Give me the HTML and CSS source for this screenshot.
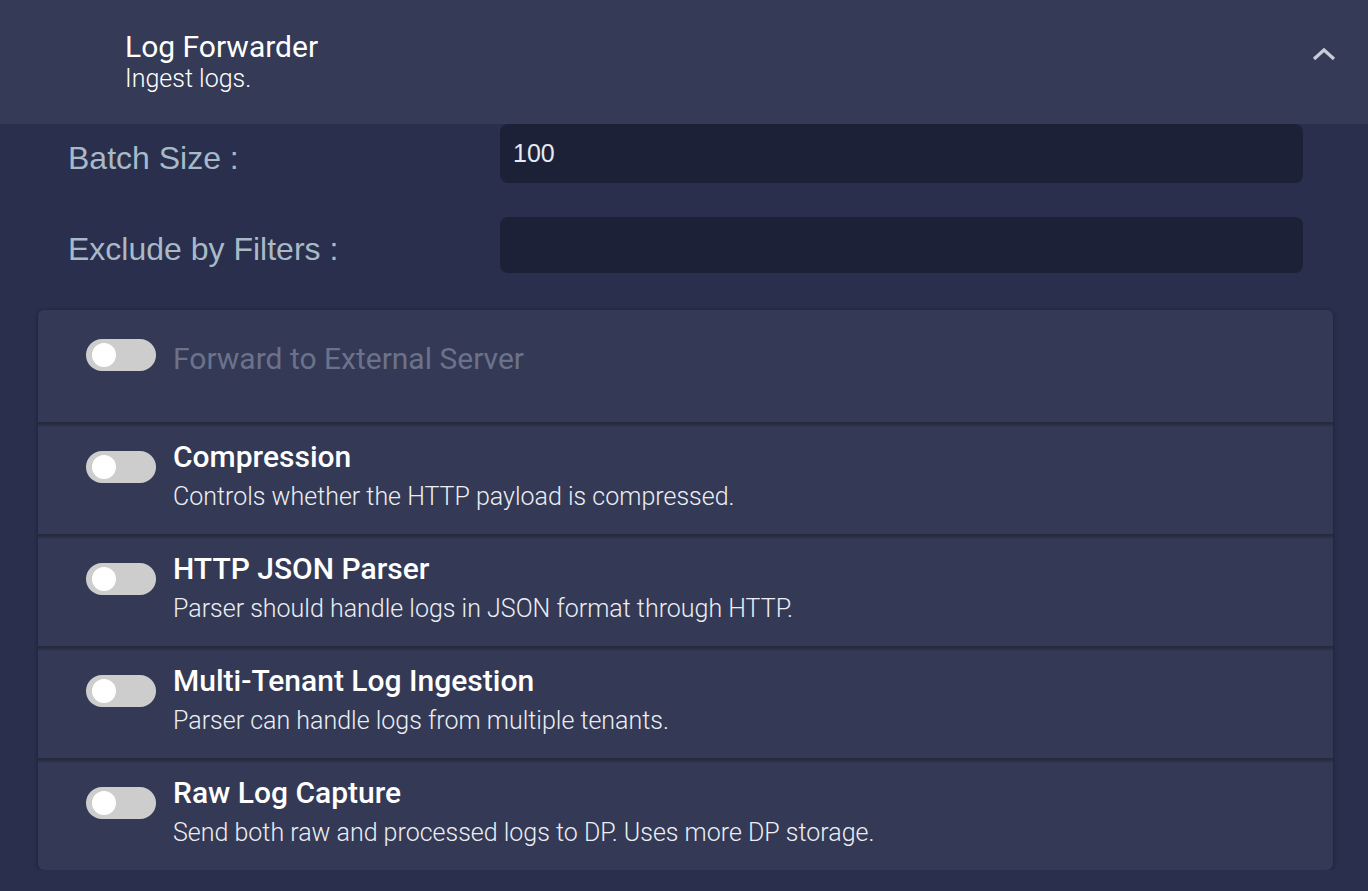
FILE: index.html
```html
<!DOCTYPE html>
<html>

<head>
    <title>Log Forwarder</title>

    <link rel="stylesheet" href="styles.css">
</head>

<body>
    <div class="header">
        <div class="header-text">
            <div class="header-title">Log Forwarder</div>
            <div class="header-sub">Ingest logs.</div>
        </div>
        <svg class="chevron" width="24" height="14" viewBox="0 0 24 14">
            <polyline points="2,12 12,3 22,12" fill="none" stroke="#c9cdd9" stroke-width="3.2" />
        </svg>
    </div>

    <div class="form">
        <div class="field">
            <label class="field-label">Batch Size :</label>
            <input class="field-input tall" type="text" value="100">
        </div>
        <div class="field">
            <label class="field-label">Exclude by Filters :</label>
            <input class="field-input" type="text" value="">
        </div>
    </div>

    <div class="card">
        <div class="row row-main">
            <span class="toggle"><span class="knob"></span></span>
            <div class="row-text">
                <div class="row-title muted">Forward to External Server</div>
            </div>
        </div>
        <div class="row">
            <span class="toggle"><span class="knob"></span></span>
            <div class="row-text">
                <div class="row-title">Compression</div>
                <div class="row-desc">Controls whether the HTTP payload is compressed.</div>
            </div>
        </div>
        <div class="row">
            <span class="toggle"><span class="knob"></span></span>
            <div class="row-text">
                <div class="row-title">HTTP JSON Parser</div>
                <div class="row-desc">Parser should handle logs in JSON format through HTTP.</div>
            </div>
        </div>
        <div class="row">
            <span class="toggle"><span class="knob"></span></span>
            <div class="row-text">
                <div class="row-title">Multi-Tenant Log Ingestion</div>
                <div class="row-desc">Parser can handle logs from multiple tenants.</div>
            </div>
        </div>
        <div class="row">
            <span class="toggle"><span class="knob"></span></span>
            <div class="row-text">
                <div class="row-title">Raw Log Capture</div>
                <div class="row-desc">Send both raw and processed logs to DP. Uses more DP storage.</div>
            </div>
        </div>
    </div>
</body>

</html>
```

FILE: styles.css
```css
body {
    margin: 0;
    background: #292f4c;
    font-family: Roboto, "Noto Sans", sans-serif;
    color: #fff;
}

.header {
    display: flex;
    justify-content: space-between;
    align-items: flex-start;
    box-sizing: border-box;
    height: 124px;
    padding: 30px 32px 0 125px;
    background: #353b56;
}

.header-title {
    font-size: 30px;
    line-height: 34px;
    font-weight: 400;
}

.header-sub {
    font-family: "Roboto Light", Roboto, sans-serif;
    font-size: 25px;
    line-height: 30px;
    font-weight: 300;
}

.chevron {
    margin-top: 17px;
}

.form {
    display: flex;
    flex-direction: column;
    gap: 34px;
    padding: 0 65px 0 68px;
}

.field {
    display: grid;
    grid-template-columns: 432px 1fr;
    align-items: center;
}

.field-label {
    font: 32px "Liberation Sans", Arial, sans-serif;
    color: #a8b9c7;
    padding-top: 9px;
}

.field-input {
    box-sizing: border-box;
    height: 56px;
    border: none;
    border-radius: 8px;
    background: #1d2138;
    color: #e6e9f0;
    font: 25px "Liberation Sans", Arial, sans-serif;
    padding: 0 13px 0;
    outline: none;
}

.field-input.tall {
    height: 59px;
}

.card {
    margin: 37px 35px 0 38px;
    background: #343a55;
    border-radius: 6px;
    box-shadow: 0 1px 4px rgba(0, 0, 0, 0.35);
    overflow: hidden;
}

.row {
    display: flex;
    align-items: flex-start;
    gap: 17px;
    box-sizing: border-box;
    height: 110px;
    padding: 15px 48px 0;
}

.row + .row {
    height: 112px;
    border-top: 2px solid #252a41;
    box-shadow: inset 0 3px 3px -2px rgba(0, 0, 0, 0.3);
}

.row-main {
    height: 112px;
    padding-top: 29px;
}

.row-main .toggle {
    margin-top: 0;
}

.row-main .row-text {
    margin-top: 2px;
}

.toggle {
    flex: none;
    display: flex;
    align-items: center;
    box-sizing: border-box;
    width: 70px;
    height: 32px;
    margin-top: 12px;
    padding: 0 6px;
    border-radius: 16px;
    background: #cdcdcd;
}

.knob {
    width: 24px;
    height: 24px;
    border-radius: 50%;
    background: #fff;
}

.row-title {
    font-size: 30px;
    line-height: 35px;
    font-weight: 500;
}

.row-title.muted {
    font-weight: 400;
    color: #6c728b;
}

.row-desc {
    margin-top: 5px;
    font-family: "Roboto Light", Roboto, sans-serif;
    font-size: 25px;
    line-height: 36px;
    font-weight: 300;
    color: #eceef4;
}
```
